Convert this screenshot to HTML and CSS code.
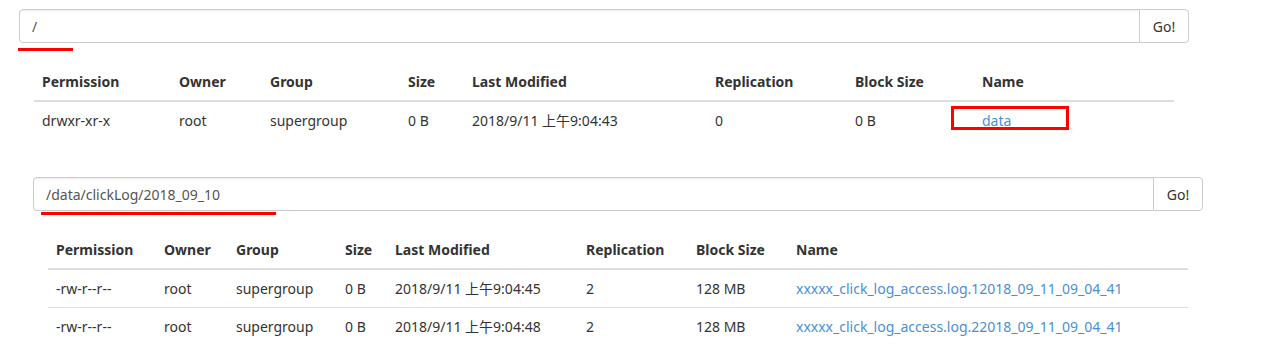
FILE: index.html
```html
<!DOCTYPE html>
<html lang="en">
<head>
    <meta charset="UTF-8">
    <title>Browse Directory</title>
    <link rel="stylesheet" href="styles.css">
</head>
<body>
    <div class="panel panel-root">
        <div class="input-group">
            <input type="text" class="path-input" value="/">
            <button class="go-btn">Go!</button>
        </div>
        <span class="mark-line mark-root"></span>

        <table class="listing listing-root">
            <colgroup>
                <col style="width:137px"><col style="width:91px"><col style="width:138px"><col style="width:64px">
                <col style="width:243px"><col style="width:140px"><col style="width:127px"><col style="width:200px">
            </colgroup>
            <thead>
                <tr>
                    <th>Permission</th><th>Owner</th><th>Group</th><th>Size</th>
                    <th>Last Modified</th><th>Replication</th><th>Block Size</th><th>Name</th>
                </tr>
            </thead>
            <tbody>
                <tr>
                    <td>drwxr-xr-x</td><td>root</td><td>supergroup</td><td>0 B</td>
                    <td>2018/9/11 上午9:04:43</td><td>0</td><td>0 B</td>
                    <td class="name-cell"><a href="#">data</a><span class="mark-box"></span></td>
                </tr>
            </tbody>
        </table>
    </div>

    <div class="panel panel-log">
        <div class="input-group">
            <input type="text" class="path-input" value="/data/clickLog/2018_09_10">
            <button class="go-btn">Go!</button>
        </div>
        <span class="mark-line mark-log"></span>

        <table class="listing">
            <colgroup>
                <col style="width:108px"><col style="width:72px"><col style="width:109px"><col style="width:50px">
                <col style="width:191px"><col style="width:110px"><col style="width:100px"><col style="width:400px">
            </colgroup>
            <thead>
                <tr>
                    <th>Permission</th><th>Owner</th><th>Group</th><th>Size</th>
                    <th>Last Modified</th><th>Replication</th><th>Block Size</th><th>Name</th>
                </tr>
            </thead>
            <tbody>
                <tr>
                    <td>-rw-r--r--</td><td>root</td><td>supergroup</td><td>0 B</td>
                    <td>2018/9/11 上午9:04:45</td><td>2</td><td>128 MB</td>
                    <td><a href="#">xxxxx_click_log_access.log.12018_09_11_09_04_41</a></td>
                </tr>
                <tr>
                    <td>-rw-r--r--</td><td>root</td><td>supergroup</td><td>0 B</td>
                    <td>2018/9/11 上午9:04:48</td><td>2</td><td>128 MB</td>
                    <td><a href="#">xxxxx_click_log_access.log.22018_09_11_09_04_41</a></td>
                </tr>
            </tbody>
        </table>
    </div>
</body>
</html>
```

FILE: styles.css
```css
body, html {
    margin: 0;
    background-color: #fff;
    color: #333;
    font-family: "Noto Sans", "Noto Sans CJK SC", sans-serif;
    font-size: 14px;
    line-height: 20px;
}

.panel {
    position: relative;
    width: 1170px;
}

.panel-root {
    margin: 9px 0 0 19px;
}

.panel-log {
    margin: 38px 0 0 33px;
}

.input-group {
    display: flex;
    height: 34px;
}

.path-input {
    flex: 1;
    height: 34px;
    box-sizing: border-box;
    padding: 6px 12px;
    border: 1px solid #ccc;
    border-radius: 4px 0 0 4px;
    box-shadow: inset 0 1px 1px rgba(0, 0, 0, 0.075);
    color: #555;
    font-family: inherit;
    font-size: 14px;
    outline: none;
}

.go-btn {
    width: 50px;
    height: 34px;
    margin-left: -1px;
    padding: 0;
    border: 1px solid #ccc;
    border-radius: 0 4px 4px 0;
    background-color: #fff;
    color: #333;
    font-family: inherit;
    font-size: 14px;
    cursor: pointer;
}

/* red annotation marks drawn over the page */
.mark-line {
    position: absolute;
    height: 3px;
    background-color: #f00;
}

.mark-root {
    left: -1px;
    top: 39px;
    width: 55px;
}

.mark-log {
    left: 8px;
    top: 35px;
    width: 235px;
}

.listing {
    width: 1140px;
    margin: 21px 15px 0;
    border-collapse: collapse;
    table-layout: fixed;
}

.listing th,
.listing td {
    padding: 8px;
    text-align: left;
    white-space: nowrap;
    vertical-align: top;
}

.listing th {
    font-weight: bold;
    border-bottom: 2px solid #ddd;
}

.listing td {
    line-height: 21px;
    border-top: 1px solid #ddd;
}

.listing tbody tr:first-child td {
    border-top: 0;
}

.listing a {
    color: #4a8fd6;
    text-decoration: none;
}

.name-cell {
    position: relative;
}

.mark-box {
    position: absolute;
    left: -23px;
    top: 4px;
    width: 112px;
    height: 18px;
    border: 3px solid #f00;
}
```
